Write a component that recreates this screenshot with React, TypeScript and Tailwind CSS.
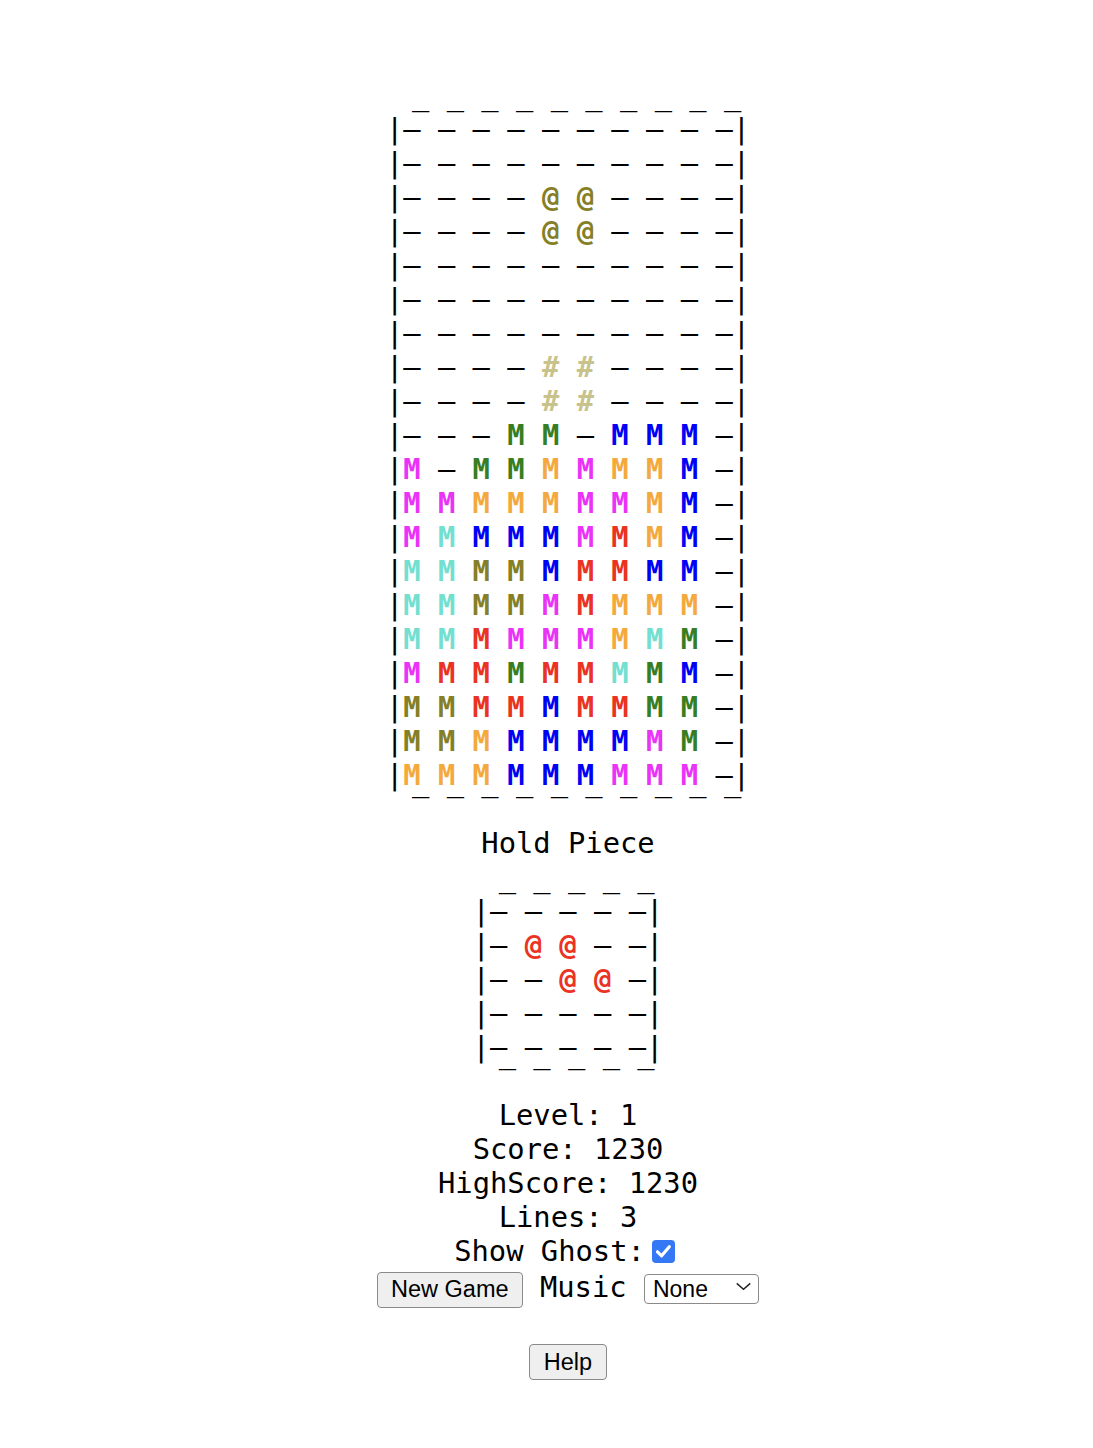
import React from "react";

const COLORS: Record<string, string> = {
  o: "text-[#857f28]",
  g: "text-[#c8c28c]",
  G: "text-[#377e22]",
  B: "text-[#0000f5]",
  P: "text-[#ea33f7]",
  O: "text-[#f4a93c]",
  C: "text-[#73dfd1]",
  R: "text-[#ea3323]",
};

const BOARD: string[] = [
  "..........",
  "..........",
  "....oo....",
  "....oo....",
  "..........",
  "..........",
  "..........",
  "....gg....",
  "....gg....",
  "...GG.BBB.",
  "P.GGOPOOB.",
  "PPOOOPPOB.",
  "PCBBBPROB.",
  "CCooBRRBB.",
  "CCooPROOO.",
  "CCRPPPOCG.",
  "PRRGRRCGB.",
  "ooRRBRRGG.",
  "ooOBBBBPG.",
  "OOOBBBPPP.",
];
// which rows hold the active piece (@) and the ghost (#)
const ACTIVE_ROWS = new Set([2, 3]);
const GHOST_ROWS = new Set([7, 8]);

const HOLD: string[] = [".....", ".RR..", "..RR.", ".....", "....."];

function Row({ cells, glyph }: { cells: string; glyph: (c: string) => string }) {
  const parts: React.ReactNode[] = [];
  parts.push("|");
  cells.split("").forEach((c, i) => {
    if (i > 0) parts.push(" ");
    if (c === ".") {
      parts.push("\u2013");
    } else {
      parts.push(
        <span key={i} className={`font-bold ${COLORS[c]}`}>
          {glyph(c)}
        </span>
      );
    }
  });
  parts.push("|");
  return <div className="whitespace-pre">{parts}</div>;
}

function Frame({ width, children }: { width: number; children: React.ReactNode }) {
  const top = " _".repeat(width);
  const bottom = " \u203e".repeat(width);
  return (
    <div>
      <div className="whitespace-pre">{top}</div>
      {children}
      <div className="whitespace-pre">{bottom}</div>
    </div>
  );
}

export default function App() {
  return (
    <div className="min-h-[1448px] bg-white text-black">
      <div
        className="pl-[43px] pt-[78px] text-center text-[28.8px] leading-[34px]"
        style={{ fontFamily: '"DejaVu Sans Mono", monospace' }}
      >
        <Frame width={10}>
          {BOARD.map((r, i) => (
            <Row
              key={i}
              cells={r}
              glyph={() => (ACTIVE_ROWS.has(i) ? "@" : GHOST_ROWS.has(i) ? "#" : "M")}
            />
          ))}
        </Frame>
        <div>Hold Piece</div>
        <Frame width={5}>
          {HOLD.map((r, i) => (
            <Row key={i} cells={r} glyph={() => "@"} />
          ))}
        </Frame>
        <div>Level: 1</div>
        <div>Score: 1230</div>
        <div>HighScore: 1230</div>
        <div>Lines: 3</div>
        <div>
          Show Ghost:
          <label className="mx-[7px] inline-block h-[23px] w-[23px] rounded-[4px] bg-[#3478f6] align-[-2px]">
            <svg viewBox="0 0 23 23" className="h-[23px] w-[23px]">
              <path
                d="M5.5 11.8 L9.6 15.8 L17.3 6.8"
                fill="none"
                stroke="white"
                strokeWidth="3.2"
                strokeLinecap="round"
                strokeLinejoin="round"
              />
            </svg>
          </label>
        </div>
        <div className="mt-[2px] whitespace-pre">
          <button
            className="inline-block h-[36px] rounded-[4px] border border-[#8a8a8a] bg-[#efefef] px-[13px] align-baseline text-[23.5px] leading-[27px] text-black"
            style={{ fontFamily: '"Liberation Sans", Arial, sans-serif' }}
          >
            New Game
          </button>
          {" Music "}
          <span className="relative inline-block align-baseline">
            <span
              className="inline-block h-[30px] w-[115px] rounded-[4px] border border-[#8a8a8a] bg-white pl-[8px] text-left text-[23px] leading-[28px]"
              style={{ fontFamily: '"Liberation Sans", Arial, sans-serif' }}
            >
              None
            </span>
            <svg
              viewBox="0 0 18 10"
              className="absolute right-[7px] top-[12px] h-[9px] w-[17px]"
            >
              <path d="M1.5 1.5 L9 8 L16.5 1.5" fill="none" stroke="#222" strokeWidth="1.6" />
            </svg>
          </span>
        </div>
        <div className="mt-[35px]">
          <button
            className="inline-block h-[36px] rounded-[4px] border border-[#8a8a8a] bg-[#efefef] px-[14px] text-[23.5px] leading-[27px] text-black"
            style={{ fontFamily: '"Liberation Sans", Arial, sans-serif' }}
          >
            Help
          </button>
        </div>
      </div>
    </div>
  );
}
